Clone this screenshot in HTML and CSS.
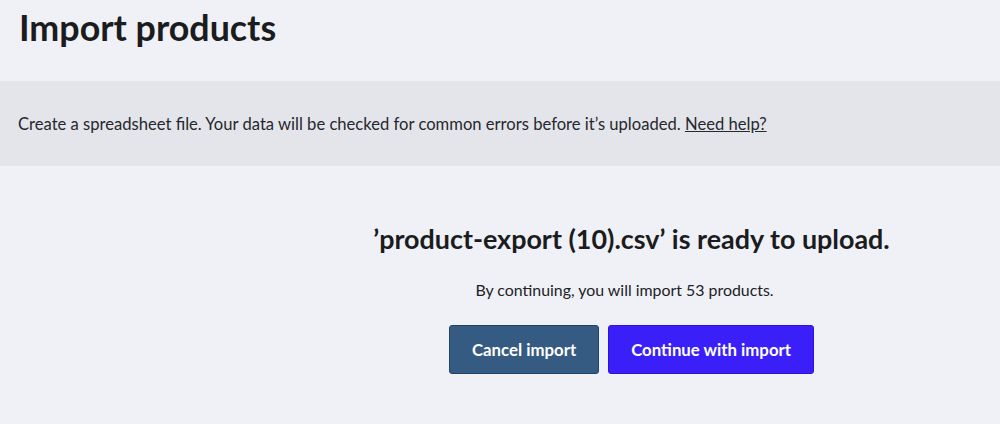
FILE: index.html
```html
<!DOCTYPE html>
<html lang="en">
<head>
    <meta charset="UTF-8">
    <meta name="viewport" content="width=device-width, initial-scale=1.0">
    <title>Import products</title>
    <link rel="stylesheet" href="styles.css">
</head>
<body>
    <header class="page-header">
        <h1>Import products</h1>
    </header>

    <div class="notice">
        <p>Create a spreadsheet file. Your data will be checked for common errors before it’s uploaded. <a href="#">Need help?</a></p>
    </div>

    <main class="layout">
        <div class="side"></div>
        <section class="ready">
            <h2>’product-export (10).csv’ is ready to upload.</h2>
            <p>By continuing, you will import 53 products.</p>
            <div class="actions">
                <button class="btn btn-secondary">Cancel import</button>
                <button class="btn btn-primary">Continue with import</button>
            </div>
        </section>
    </main>
</body>
</html>
```

FILE: styles.css
```css
body {
    margin: 0;
    font-family: Lato, 'Liberation Sans', Arial, sans-serif;
    background-color: #f0f1f6;
    color: #1b1c20;
}
.page-header {
    height: 81px;
    padding: 0 19px;
    box-sizing: border-box;
}
.page-header h1 {
    margin: 0;
    padding-top: 7px;
    font-size: 35.8px;
    font-weight: 700;
    line-height: 42px;
}
.notice {
    background-color: #e4e5ea;
    height: 85px;
    padding: 0 18px;
    display: flex;
    align-items: center;
    box-sizing: border-box;
}
.notice p {
    margin: 0;
    font-size: 16.6px;
    color: #26282d;
}
.notice a {
    color: #26282d;
}
.layout {
    display: grid;
    grid-template-columns: 263px 1fr;
}
.ready {
    display: flex;
    flex-direction: column;
    align-items: center;
    padding-top: 56px;
}
.ready h2 {
    margin: 0;
    font-size: 26.9px;
    font-weight: 700;
    line-height: 34px;
}
.ready p {
    margin: 24px 14px 0 0;
    font-size: 15.9px;
    line-height: 20px;
    color: #202226;
}
.actions {
    display: flex;
    gap: 9px;
    margin-top: 25px;
}
.btn {
    height: 49px;
    padding: 0 22px;
    border-radius: 3px;
    font-family: inherit;
    font-size: 16.8px;
    font-weight: 700;
    color: white;
    cursor: pointer;
}
.btn-secondary {
    background-color: #355b83;
    border: 1px solid #20436b;
}
.btn-primary {
    background-color: #3a1ff9;
    border: 1px solid #2c13e0;
}
```
